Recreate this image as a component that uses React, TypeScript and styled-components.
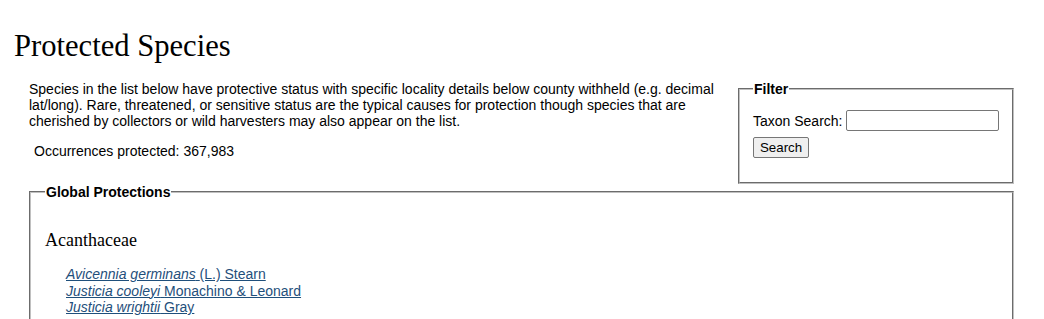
import React, { useState } from 'react';
import styled, { createGlobalStyle } from 'styled-components';

const GlobalStyle = createGlobalStyle`
  body {
    margin: 0;
    background: #fff;
    color: #000;
    font-family: "Liberation Sans", Arial, sans-serif;
    font-size: 14px;
  }
`;

const Page = styled.div`
  padding: 0 30px 0 29px;
`;

const Title = styled.h1`
  margin: 28px 0 17px -15px;
  font-family: "Liberation Serif", "Times New Roman", serif;
  font-weight: normal;
  font-size: 30.6px;
  line-height: 36px;
`;

const TopRow = styled.div`
  display: flex;
  align-items: flex-start;
  gap: 22px;
`;

const Intro = styled.div`
  flex: 1;
`;

const Paragraph = styled.p`
  margin: 0;
  line-height: 16px;
`;

const Count = styled.div`
  margin: 14px 0 0 5px;
`;

const Fieldset = styled.fieldset<{ $width?: string }>`
  margin: 0;
  padding: 13px 12px 11px 13px;
  border: 2px groove #c0c0c0;
  width: ${(p) => p.$width || 'auto'};
  box-sizing: border-box;
`;

const Legend = styled.legend`
  padding: 0 1px;
  font-weight: bold;
  font-size: 14px;
`;

const FilterForm = styled.form`
  display: flex;
  flex-direction: column;
  align-items: flex-start;
  gap: 6px;
  padding-bottom: 13px;
`;

const FieldRow = styled.label`
  display: flex;
  align-items: center;
  gap: 3px;
`;

const TextInput = styled.input`
  width: 153px;
  height: 21px;
  box-sizing: border-box;
  border: 1px solid #767676;
  border-radius: 2px;
  padding: 1px 3px;
  font: 13px "Liberation Sans", Arial, sans-serif;
`;

const SearchButton = styled.button`
  height: 21px;
  padding: 1px 6px;
  font: 13.3px "Liberation Sans", Arial, sans-serif;
  color: #000;
  background: #efefef;
  border: 1px solid #767676;
  border-radius: 2px;
`;

const Globals = styled(Fieldset)`
  margin-top: 0;
  padding: 30px 14px 10px 14px;
`;

const Family = styled.h2`
  margin: 0 0 15px;
  font-family: "Liberation Serif", "Times New Roman", serif;
  font-weight: normal;
  font-size: 18px;
`;

const TaxonList = styled.div`
  margin-left: 21px;
  display: flex;
  flex-direction: column;
`;

const TaxonLink = styled.a`
  color: #1f4f7b;
  text-decoration: underline;
  line-height: 16.5px;
`;

const taxa = [
  { sci: 'Avicennia germinans', author: '(L.) Stearn' },
  { sci: 'Justicia cooleyi', author: 'Monachino & Leonard' },
  { sci: 'Justicia wrightii', author: 'Gray' },
];

const App: React.FC = () => {
  const [query, setQuery] = useState('');

  return (
    <Page>
      <GlobalStyle />
      <Title>Protected Species</Title>
      <TopRow>
        <Intro>
          <Paragraph>
            Species in the list below have protective status with specific locality details below county
            withheld (e.g. decimal lat/long). Rare, threatened, or sensitive status are the typical causes for
            protection though species that are cherished by collectors or wild harvesters may also appear on
            the list.
          </Paragraph>
          <Count>Occurrences protected: 367,983</Count>
        </Intro>
        <Fieldset $width="276px">
          <Legend>Filter</Legend>
          <FilterForm onSubmit={(e) => e.preventDefault()}>
            <FieldRow>
              Taxon Search:
              <TextInput value={query} onChange={(e) => setQuery(e.target.value)} />
            </FieldRow>
            <SearchButton type="submit">Search</SearchButton>
          </FilterForm>
        </Fieldset>
      </TopRow>
      <Globals>
        <Legend>Global Protections</Legend>
        <Family>Acanthaceae</Family>
        <TaxonList>
          {taxa.map((t) => (
            <TaxonLink key={t.sci} href="#">
              <i>{t.sci}</i> {t.author}
            </TaxonLink>
          ))}
        </TaxonList>
      </Globals>
    </Page>
  );
};

export default App;
